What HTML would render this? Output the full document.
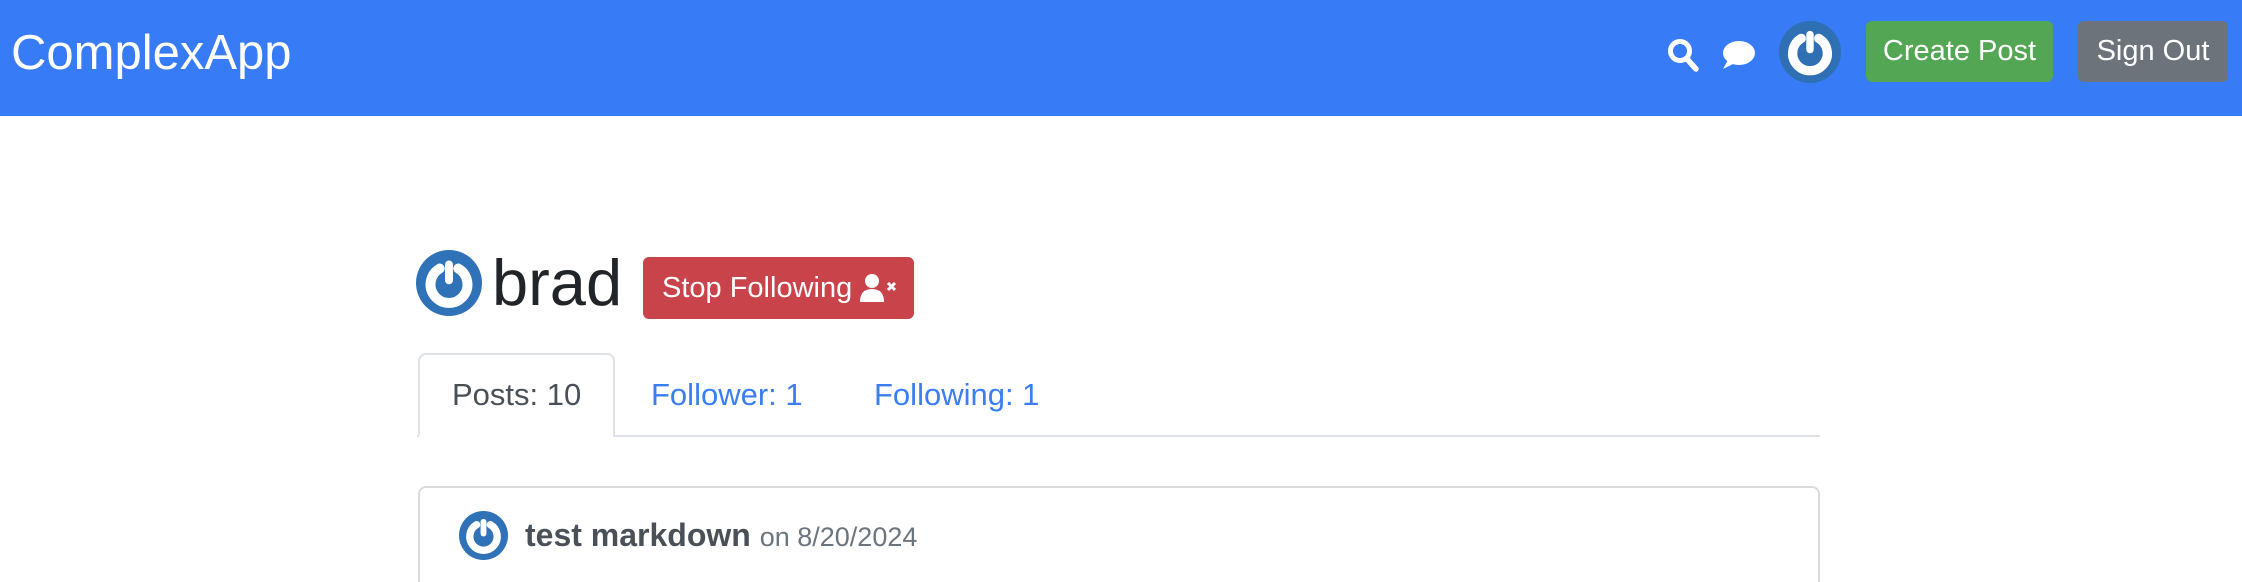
<!DOCTYPE html>
<html><head><meta charset="utf-8"><style>
*{margin:0;padding:0;box-sizing:border-box}
html,body{width:2242px;height:582px;overflow:hidden}
body{background:#fff;font-family:"Liberation Sans",sans-serif;position:relative}
.a{position:absolute;white-space:nowrap}
.nav{position:absolute;left:0;top:0;width:2242px;height:116px;background:#377bf6}
.btn{position:absolute;border-radius:6px;color:#fff;display:flex;align-items:center;justify-content:center;font-size:29px}
</style></head><body>
<div class="nav"></div>
<div class="a" style="left:11px;top:24px;font-size:49px;color:#fff;line-height:58px">ComplexApp</div>
<svg class="a" style="left:1667px;top:38px" width="32" height="34" viewBox="0 0 32 34"><circle cx="13" cy="13" r="9.5" fill="none" stroke="#fff" stroke-width="5"/><line x1="20" y1="21" x2="29" y2="31" stroke="#fff" stroke-width="5.5" stroke-linecap="round"/></svg>
<svg class="a" style="left:1720px;top:40px" width="36" height="30" viewBox="0 0 36 30"><ellipse cx="19" cy="13" rx="16" ry="12" fill="#fff"/><path d="M8 20 L3 29 L15 23 Z" fill="#fff"/></svg>
<svg class="a" style="left:1778px;top:21px" width="64" height="62" viewBox="0 0 100 100"><circle cx="50" cy="50" r="50" fill="#2f6fb3"/><path d="M36 28 A28 28 0 1 0 64 28" fill="none" stroke="#fff" stroke-width="15" stroke-linecap="round"/><line x1="50" y1="22" x2="50" y2="46" stroke="#fff" stroke-width="12" stroke-linecap="round"/></svg>
<div class="btn" style="left:1866px;top:21px;width:187px;height:61px;background:#53a653">Create Post</div>
<div class="btn" style="left:2078px;top:21px;width:150px;height:61px;background:#6d737b">Sign Out</div>

<svg class="a" style="left:416px;top:250px" width="66" height="66" viewBox="0 0 100 100"><circle cx="50" cy="50" r="50" fill="#2f72b8"/><path d="M36 28 A28 28 0 1 0 64 28" fill="none" stroke="#fff" stroke-width="15" stroke-linecap="round"/><line x1="50" y1="22" x2="50" y2="46" stroke="#fff" stroke-width="12" stroke-linecap="round"/></svg>
<div class="a" style="left:492px;top:246px;font-size:65px;line-height:74px;color:#212529">brad</div>
<div class="btn" style="left:643px;top:257px;width:271px;height:62px;background:#c9434a;justify-content:flex-start;padding-left:19px">Stop Following
<svg style="margin-left:7px" width="39" height="30" viewBox="0 0 39 30"><circle cx="13" cy="8" r="7" fill="#fff"/><path d="M1 29 Q1 16 13 16 Q25 16 25 29 Z" fill="#fff"/><path d="M29 10 L36 17 M36 10 L29 17" stroke="#fff" stroke-width="3"/></svg></div>

<div class="a" style="left:418px;top:353px;width:197px;height:84px;border:2px solid #dee2e6;border-bottom:none;border-radius:8px 8px 0 0;background:#fff"></div>
<div class="a" style="left:418px;top:435px;width:1402px;height:2px;background:#dee2e6"></div>
<div class="a" style="left:417px;top:435px;width:198px;height:2px;background:#fff;border-left:2px solid #dee2e6;border-right:2px solid #dee2e6"></div>
<div class="a" style="left:452px;top:377px;font-size:31px;line-height:36px;color:#495057">Posts: 10</div>
<div class="a" style="left:651px;top:377px;font-size:31px;line-height:36px;color:#3a7ef2">Follower: 1</div>
<div class="a" style="left:874px;top:377px;font-size:31px;line-height:36px;color:#3a7ef2">Following: 1</div>

<div class="a" style="left:418px;top:486px;width:1402px;height:96px;border:2px solid #dcdcdc;border-bottom:none;border-radius:8px 8px 0 0"></div>
<svg class="a" style="left:459px;top:511px" width="49" height="49" viewBox="0 0 100 100"><circle cx="50" cy="50" r="50" fill="#2f72b8"/><path d="M36 28 A28 28 0 1 0 64 28" fill="none" stroke="#fff" stroke-width="15" stroke-linecap="round"/><line x1="50" y1="22" x2="50" y2="46" stroke="#fff" stroke-width="12" stroke-linecap="round"/></svg>
<div class="a" style="left:525px;top:517px;font-size:32px;line-height:36px;color:#495057;font-weight:bold">test markdown <span style="font-weight:normal;font-size:27px;color:#6c757d">on 8/20/2024</span></div>
</body></html>
